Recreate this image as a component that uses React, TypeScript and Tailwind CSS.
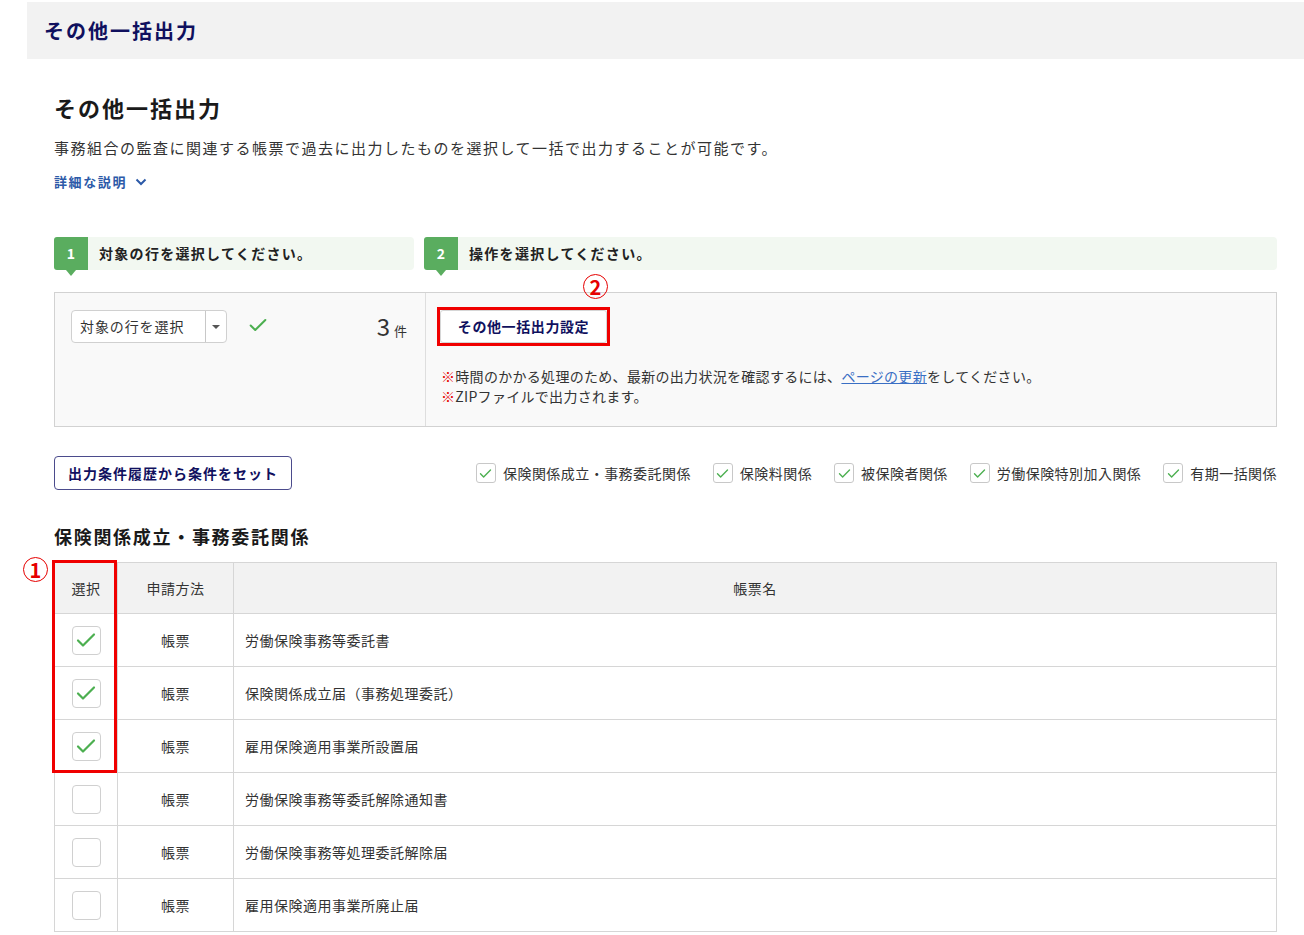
import React from "react"

const font = { fontFamily: '"Noto Sans CJK JP", "Noto Sans", sans-serif' }

const Check = ({ className = "" }: { className?: string }) => (
    <svg viewBox="0 0 24 24" className={className} fill="none" stroke="currentColor" strokeWidth={2.2} strokeLinecap="round" strokeLinejoin="round">
        <path d="M4 12.5l5 5L20 6.5" />
    </svg>
)

const Box = ({ checked, size = "big" }: { checked: boolean; size?: "big" | "small" }) => (
    <span
        className={
            size === "big"
                ? "flex h-[29px] w-[29px] items-center justify-center rounded-[4px] border border-[#d0d0d0] bg-white text-[#4caf50]"
                : "flex h-[20px] w-[20px] shrink-0 items-center justify-center rounded-[3px] border border-[#c8c8c8] bg-white text-[#4caf50]"
        }
    >
        {checked && <Check className={size === "big" ? "h-[24px] w-[24px]" : "h-[15px] w-[15px]"} />}
    </span>
)

const Step = ({ n, label, className }: { n: string; label: string; className: string }) => (
    <div className={"flex h-[33px] items-center rounded-[4px] bg-[#f2f8f1] " + className}>
        <div className="relative flex h-[33px] w-[34px] shrink-0 items-center justify-center rounded-l-[3px] bg-[#5aad5f] text-[14px] font-bold text-white">
            {n}
            <span className="absolute -bottom-[6px] left-1/2 -ml-[5px] h-0 w-0 border-x-[5px] border-t-[6px] border-x-transparent border-t-[#5aad5f]" />
        </div>
        <span className="ml-[11px] text-[14px] font-bold tracking-[1.3px] text-[#222]">{label}</span>
    </div>
)

const filters = ["保険関係成立・事務委託関係", "保険料関係", "被保険者関係", "労働保険特別加入関係", "有期一括関係"]

const rows = [
    { checked: true, name: "労働保険事務等委託書" },
    { checked: true, name: "保険関係成立届（事務処理委託）" },
    { checked: true, name: "雇用保険適用事業所設置届" },
    { checked: false, name: "労働保険事務等委託解除通知書" },
    { checked: false, name: "労働保険事務等処理委託解除届" },
    { checked: false, name: "雇用保険適用事業所廃止届" },
]

export default function App() {
    return (
        <div className="min-h-[935px] bg-white pl-[27px] pt-[2px] text-[#333]" style={font}>
            {/* top bar */}
            <div className="flex h-[57px] items-center bg-[#f2f2f2] pl-[17px]">
                <h1 className="text-[20px] font-bold tracking-[2px] text-[#10105e]">その他一括出力</h1>
            </div>

            <div className="pr-[27px] pl-[27px]">
                <h2 className="mt-[32px] text-[22px] font-bold leading-[32px] tracking-[2px] text-[#1a1a1a]">その他一括出力</h2>
                <p className="mt-[13px] text-[15px] leading-[24px] tracking-[1.5px] text-[#333]">
                    事務組合の監査に関連する帳票で過去に出力したものを選択して一括で出力することが可能です。
                </p>
                <div className="mt-[12px] flex items-center gap-[8px] text-[13px] font-bold leading-[20px] tracking-[1.6px] text-[#2c5aa8]">
                    詳細な説明
                    <svg viewBox="0 0 12 8" className="h-[8px] w-[12px]" fill="none" stroke="currentColor" strokeWidth={2}>
                        <path d="M1.5 1.5l4.5 4.5 4.5-4.5" />
                    </svg>
                </div>

                {/* steps */}
                <div className="mt-[45px] flex gap-[10px]">
                    <Step n="1" label="対象の行を選択してください。" className="w-[360px]" />
                    <Step n="2" label="操作を選択してください。" className="flex-1" />
                </div>

                <div className="mt-[22px] flex h-[135px] border border-[#d2d2d2] bg-[#f9f9f9]">
                    <div className="flex w-[371px] shrink-0 items-start border-r border-[#dedede] pt-[17px] pl-[16px] pr-[18px]">
                        <div className="flex h-[33px] items-center rounded-[4px] border border-[#d0d0d0] bg-white">
                            <span className="w-[133px] pl-[8px] text-[14px] tracking-[0.9px] text-[#333]">対象の行を選択</span>
                            <span className="flex h-full w-[21px] items-center justify-center border-l border-[#c8c8c8]">
                                <span className="h-0 w-0 border-x-[4px] border-t-[4px] border-x-transparent border-t-[#555]" />
                            </span>
                        </div>
                        <Check className="ml-[20px] mt-[4px] h-[22px] w-[22px] text-[#4caf50]" />
                        <div className="ml-auto flex items-baseline gap-[4px] pt-[1px] text-[#333]">
                            <span className="text-[24px] leading-[30px]">3</span>
                            <span className="text-[13px]">件</span>
                        </div>
                    </div>
                    <div className="relative flex-1 pt-[14px] pl-[11px]">
                        <span className="absolute left-[157px] -top-[19px] flex h-[25px] w-[25px] items-center justify-center rounded-full border border-[#e60000] text-[20px] font-bold leading-none text-[#e60000]">
                            2
                        </span>
                        <div className="inline-flex border-[3px] border-[#f00000]">
                            <button className="h-[33px] w-[167px] rounded-[3px] border border-[#d6d6d6] bg-white text-[14px] font-bold tracking-[0.6px] text-[#10105e]">
                                その他一括出力設定
                            </button>
                        </div>
                        <div className="mt-[20px] pl-[4px] text-[14px] leading-[20px] tracking-[0.3px] text-[#333]">
                            <p>
                                <span className="text-[#e60000]">※</span>時間のかかる処理のため、最新の出力状況を確認するには、
                                <span className="text-[#3a6fc4] underline">ページの更新</span>をしてください。
                            </p>
                            <p>
                                <span className="text-[#e60000]">※</span>ZIPファイルで出力されます。
                            </p>
                        </div>
                    </div>
                </div>

                {/* filter row */}
                <div className="mt-[29px] flex items-center justify-between">
                    <button className="h-[34px] w-[238px] rounded-[4px] border border-[#4b4b8c] bg-white text-[14px] font-bold tracking-[1px] text-[#10105e]">
                        出力条件履歴から条件をセット
                    </button>
                    <div className="flex items-center gap-[22px]">
                        {filters.map((f) => (
                            <label key={f} className="flex items-center gap-[7px] text-[14px] tracking-[0.45px] text-[#333]">
                                <Box checked size="small" />
                                {f}
                            </label>
                        ))}
                    </div>
                </div>

                <h3 className="mt-[33px] text-[18px] font-bold leading-[26px] tracking-[1.7px] text-[#1a1a1a]">保険関係成立・事務委託関係</h3>

                {/* table */}
                <div className="relative mt-[13px]">
                    <table className="w-full border-collapse text-[14px] tracking-[0.5px] text-[#333]">
                        <thead>
                            <tr className="h-[51px] bg-[#f2f2f2]">
                                <th className="w-[63px] border border-[#d6d6d6] font-normal">選択</th>
                                <th className="w-[116px] border border-[#d6d6d6] font-normal">申請方法</th>
                                <th className="border border-[#d6d6d6] font-normal">帳票名</th>
                            </tr>
                        </thead>
                        <tbody>
                            {rows.map((r) => (
                                <tr key={r.name} className="h-[53px]">
                                    <td className="border border-[#d6d6d6]">
                                        <div className="flex justify-center">
                                            <Box checked={r.checked} />
                                        </div>
                                    </td>
                                    <td className="border border-[#d6d6d6] text-center">帳票</td>
                                    <td className="border border-[#d6d6d6] pl-[11px]">{r.name}</td>
                                </tr>
                            ))}
                        </tbody>
                    </table>
                    {/* annotation 1 */}
                    <div className="pointer-events-none absolute -left-[2px] -top-[2px] h-[213px] w-[65px] border-[3px] border-[#f00000]" />
                    <span className="absolute -left-[31px] -top-[5px] flex h-[25px] w-[25px] items-center justify-center rounded-full border border-[#e60000] text-[20px] font-bold leading-none text-[#e60000]">
                        1
                    </span>
                </div>
            </div>
        </div>
    )
}
